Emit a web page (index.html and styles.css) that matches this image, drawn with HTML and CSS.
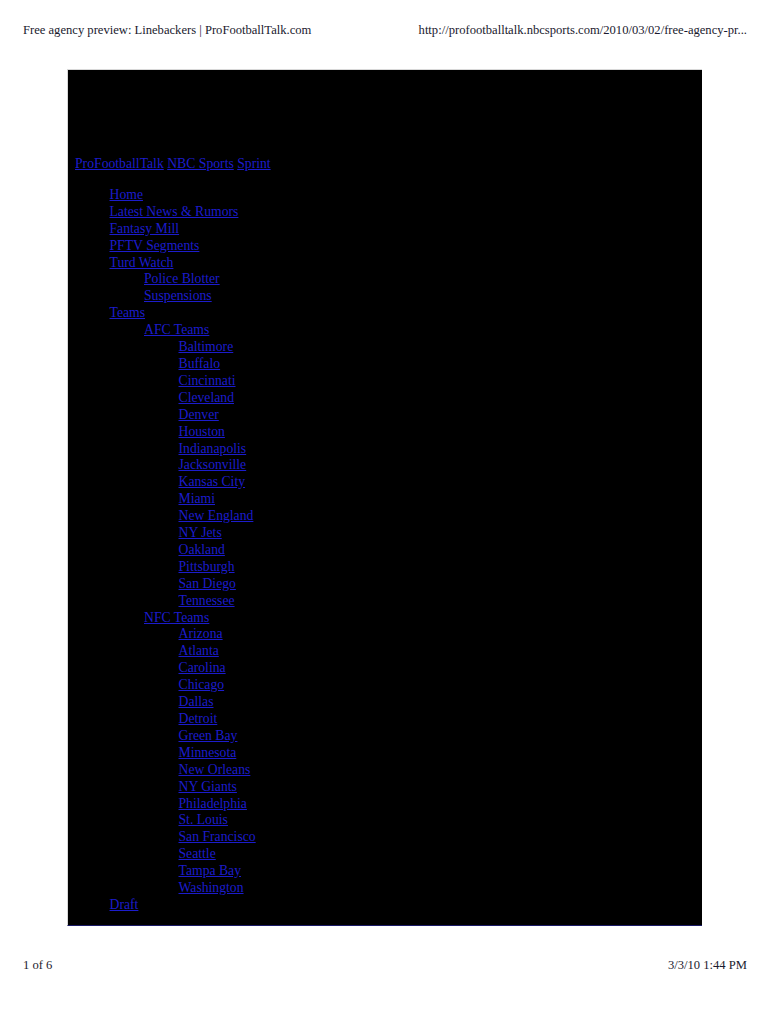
FILE: index.html
```html
<!DOCTYPE html>
<html>
<head>
<meta charset="utf-8">
<link rel="stylesheet" href="styles.css">
</head>
<body>
<div class="page">
  <div class="bar top">
    <span>Free agency preview: Linebackers | ProFootballTalk.com</span>
    <span>http://profootballtalk.nbcsports.com/2010/03/02/free-agency-pr...</span>
  </div>
  <div class="sheet">
    <div class="brands"><a href="#">ProFootballTalk</a> <a href="#">NBC Sports</a> <a href="#">Sprint</a></div>
    <ul class="nav">
      <li><a href="#">Home</a></li>
      <li><a href="#">Latest News &amp; Rumors</a></li>
      <li><a href="#">Fantasy Mill</a></li>
      <li><a href="#">PFTV Segments</a></li>
      <li><a href="#">Turd Watch</a>
        <ul class="sub">
          <li><a href="#">Police Blotter</a></li>
          <li><a href="#">Suspensions</a></li>
        </ul>
      </li>
      <li><a href="#">Teams</a>
        <ul class="sub">
          <li><a href="#">AFC Teams</a>
            <ul class="sub">
              <li><a href="#">Baltimore</a></li>
              <li><a href="#">Buffalo</a></li>
              <li><a href="#">Cincinnati</a></li>
              <li><a href="#">Cleveland</a></li>
              <li><a href="#">Denver</a></li>
              <li><a href="#">Houston</a></li>
              <li><a href="#">Indianapolis</a></li>
              <li><a href="#">Jacksonville</a></li>
              <li><a href="#">Kansas City</a></li>
              <li><a href="#">Miami</a></li>
              <li><a href="#">New England</a></li>
              <li><a href="#">NY Jets</a></li>
              <li><a href="#">Oakland</a></li>
              <li><a href="#">Pittsburgh</a></li>
              <li><a href="#">San Diego</a></li>
              <li><a href="#">Tennessee</a></li>
            </ul>
          </li>
          <li><a href="#">NFC Teams</a>
            <ul class="sub">
              <li><a href="#">Arizona</a></li>
              <li><a href="#">Atlanta</a></li>
              <li><a href="#">Carolina</a></li>
              <li><a href="#">Chicago</a></li>
              <li><a href="#">Dallas</a></li>
              <li><a href="#">Detroit</a></li>
              <li><a href="#">Green Bay</a></li>
              <li><a href="#">Minnesota</a></li>
              <li><a href="#">New Orleans</a></li>
              <li><a href="#">NY Giants</a></li>
              <li><a href="#">Philadelphia</a></li>
              <li><a href="#">St. Louis</a></li>
              <li><a href="#">San Francisco</a></li>
              <li><a href="#">Seattle</a></li>
              <li><a href="#">Tampa Bay</a></li>
              <li><a href="#">Washington</a></li>
            </ul>
          </li>
        </ul>
      </li>
      <li><a href="#">Draft</a></li>
    </ul>
  </div>
  <div class="bar bottom">
    <span>1 of 6</span>
    <span>3/3/10 1:44 PM</span>
  </div>
</div>
</body>
</html>
```

FILE: styles.css
```css
html, body {
  margin: 0;
  padding: 0;
  background: #fff;
}
.page {
  font-family: "Liberation Serif", "Times New Roman", serif;
  display: flex;
  flex-direction: column;
}
.bar {
  display: flex;
  justify-content: space-between;
  padding: 0 23px;
  font-size: 12.6px;
  line-height: 16px;
  color: #1a1a2e;
}
.top {
  padding-top: 22px;
  height: 69px;
  box-sizing: border-box;
  padding-bottom: 0;
}
.bottom {
  padding-top: 31px;
}
.sheet {
  margin: 0 68px 0 67px;
  height: 857px;
  box-sizing: border-box;
  background: #000;
  border-top: 1px solid #d8d8d8;
  border-left: 1px solid #d8d8d8;
  border-bottom: 1px solid #1a1a66;
  padding: 86px 0 0 7px;
  font-size: 13.7px;
  line-height: 16.9px;
}
.sheet a {
  color: #1c1ccc;
  text-decoration: underline;
}
.brands {
  margin-bottom: 14px;
}
.nav, .sub {
  list-style: none;
  margin: 0;
  padding: 0 0 0 34.5px;
}
```
